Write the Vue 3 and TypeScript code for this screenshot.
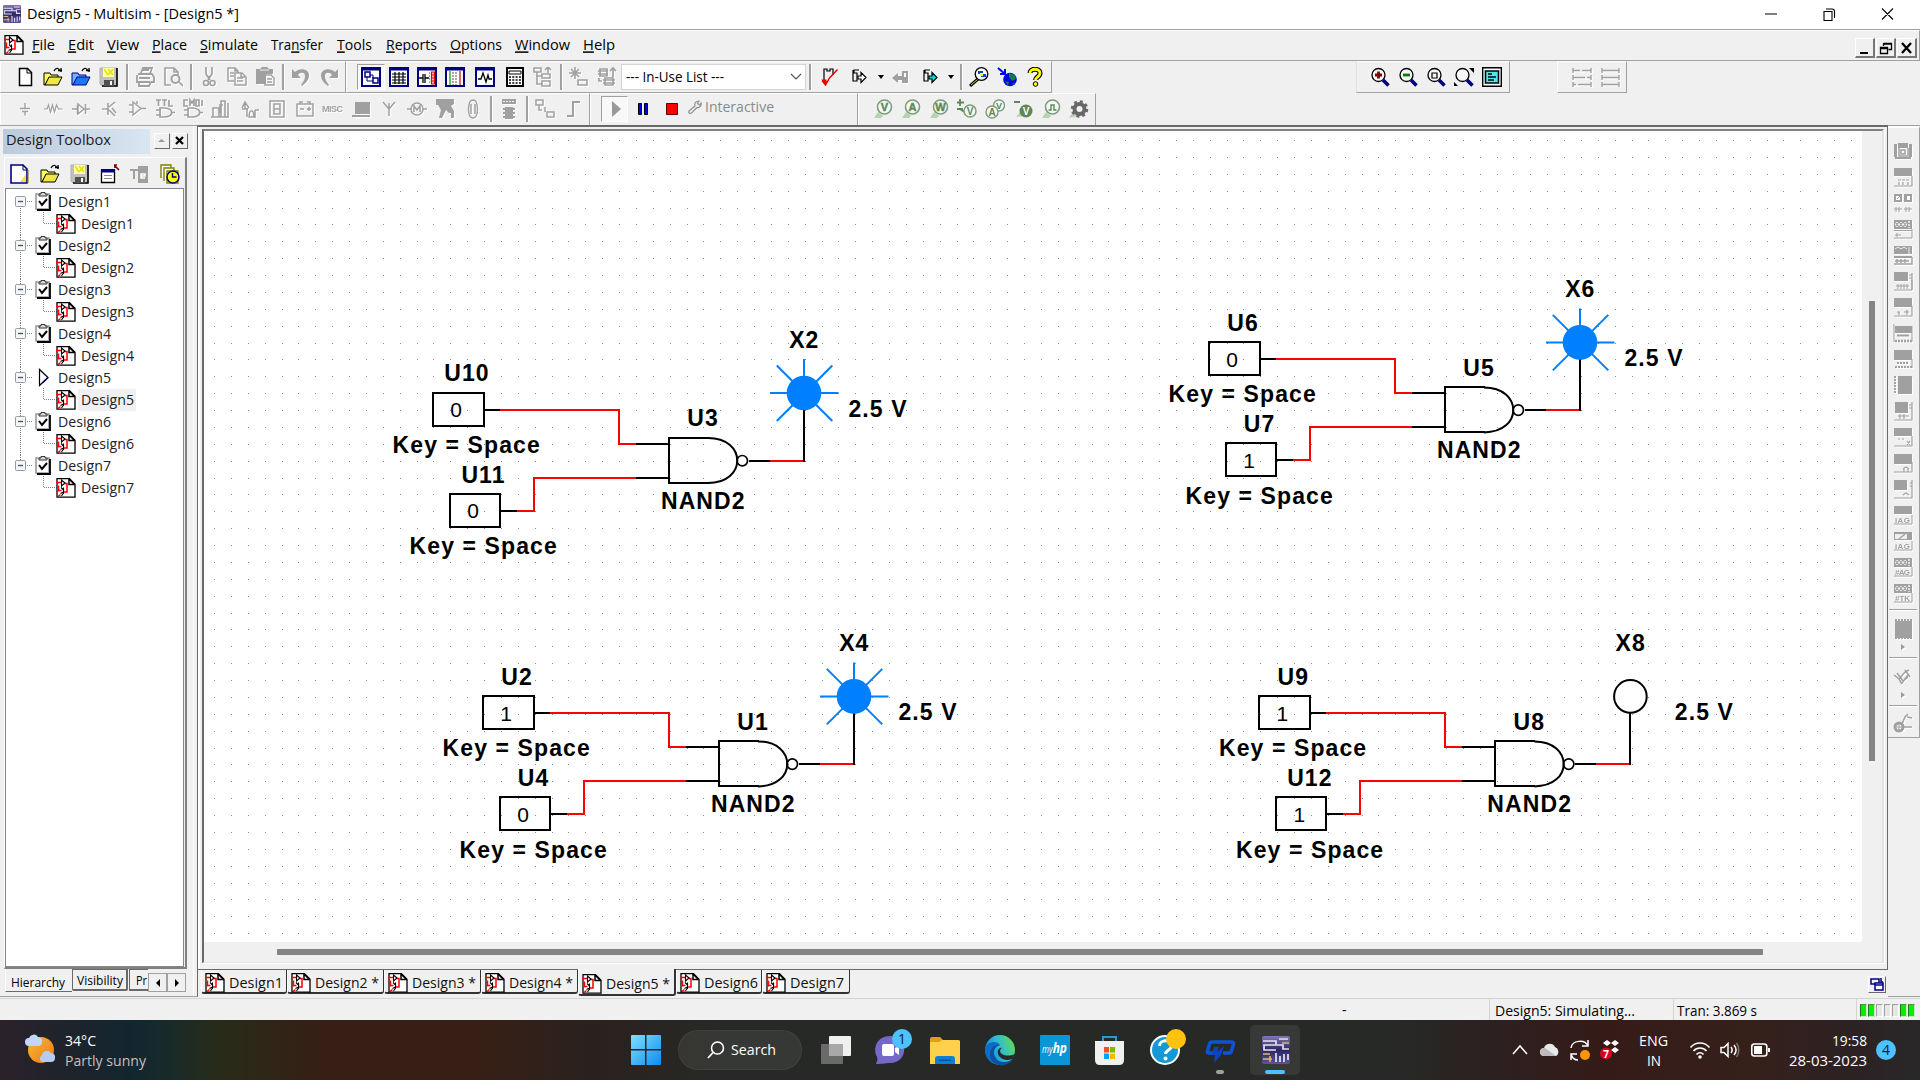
<script setup lang="ts">
import { h } from 'vue'

/* Text fitted to a known width; "&" marks the underlined accelerator letter. */
interface TxProps { t: string; w: number; s?: number; c?: string; f?: string }
const Tx = (p: TxProps) => {
  const s = p.s ?? 15
  const k = p.t.indexOf('&')
  const body = k < 0
    ? [p.t]
    : [p.t.slice(0, k), h('tspan', { 'text-decoration': 'underline' }, p.t[k + 1]), p.t.slice(k + 2)]
  return h('svg', { width: p.w, height: 20, overflow: 'visible', display: 'block' }, [
    h('text', {
      x: 0, y: 10 + s * 0.357, 'font-size': s, textLength: p.w, lengthAdjust: 'spacingAndGlyphs',
      fill: p.c ?? '#000', 'font-family': p.f ?? "'Open Sans','Noto Sans',sans-serif",
    }, body),
  ])
}
Tx.props = ['t', 'w', 's', 'c', 'f']

const g = '#a0a0a0'
const doc = '<path d="M1 .7h12.500l5.500 5.500v13H1z" fill="#fff" stroke="#000" stroke-width="1.300"/><path d="M13 .7v5.800h6M13 1l5.500 5.500" fill="none" stroke="#000" stroke-width="1.500"/><path d="M0 4.500h5M2.500 7.500v6M2.500 12.500h3M8.500 5.500h2.500v8.500H8M2 18.500l2.500-2" fill="none" stroke="#f00" stroke-width="1.500"/><path d="M5.500 2v6l3.500-3zM5 9.500l3 3M7.500 9.500v6.500M7.500 14l-3 1.500M7.500 15l-2 3" fill="none" stroke="#000" stroke-width="1.100"/>'
const win = (s: string) => `<path d="M1 1h18v18H1z" fill="#fff" stroke="#000080" stroke-width="2"/><path d="M1 2h18" stroke="#000080" stroke-width="3"/>${s}`
const lens = (s: string) => `<circle cx="8.500" cy="8" r="6.500" fill="#f8f8f8" stroke="#000" stroke-width="1.300"/><path d="M13 13l5.500 5.500" stroke="#000080" stroke-width="3.500"/>${s}`
const ln = (d: string, w = 1.4) => `<path d="${d}" fill="none" stroke="${g}" stroke-width="${w}"/>`
const probe = (s: string, t: string) => `<path d="M1 19l4-6 5 4-2 2z" fill="#b5d3b0"/><circle cx="11.500" cy="8" r="7" fill="#f4f8f4" stroke="#7d9c78" stroke-width="1.600"/><text x="11.500" y="12" font-size="11" font-weight="700" text-anchor="middle" fill="#5f8659" stroke="#5f8659" stroke-width=".4" font-family="Liberation Sans">${t}</text>${s}`
const folder = (a: string, b: string) => `<path d="M1 6h6l1 2h7v3H6l-4 7H1z" fill="${a}" stroke="#000" /><path d="M6 10h13l-4 8H2z" fill="${b}" stroke="#000"/><path d="M11 4c2-4 5-3 6 0M15 3.500h4M18 1v4" fill="none" stroke="#000" stroke-width="1.300"/>`

const icons: Record<string, string> = {
  doc,
  new: '<path d="M4.500 1.500h8l4 4v13h-12z" fill="#fff" stroke="#000" stroke-width="1.500"/><path d="M12 2v4h4" fill="none" stroke="#000"/>',
  open: folder('#ffff60', '#f0e840'),
  openb: '<path d="M1 6h6l1 2h7v3H6l-4 7H1z" fill="#70b4ff" stroke="#000080"/><path d="M6 10h13l-4 8H2z" fill="#1878f8" stroke="#000080"/><path d="M11 4c2-4 5-3 6 0M15 3.500h4M18 1v4" fill="none" stroke="#000" stroke-width="1.300"/>',
  save: '<path d="M1 1h17v18H3l-2-2z" fill="#c0c0c0" stroke="#b0b0b0"/><path d="M18 1v18H3" fill="none" stroke="#000" stroke-width="1.600"/><path d="M4 1h11v9H4z" fill="#ffffb0"/><path d="M5 2l4 6M9 2l5 6M14 2l-5 6" stroke="#e8e000" stroke-width="1.500"/><path d="M5 13h10v6H5z" fill="#505050"/><path d="M11 14h2v4h-2z" fill="#fff"/>',
  print: ln('M6 6l2-5h9l-2 6M3 7h14l2 3v5h-3M2 8v7h13M4 11h11M4 15v4h10l2-4M8 3h6', 1.8),
  preview: ln('M8 18H2V1h9l4 4v3M11 1v4h4M16 15l4 4', 1.6) + `<circle cx="12.500" cy="12" r="4" fill="none" stroke="${g}" stroke-width="2"/>`,
  cut: ln('M7 0v7l4 6M13 0v7l-4 6M10 9v4', 1.7) + `<circle cx="7" cy="16" r="2.500" fill="none" stroke="${g}" stroke-width="1.600"/><circle cx="13.500" cy="16" r="2.500" fill="none" stroke="${g}" stroke-width="1.600"/>`,
  copy: ln('M7 14H1V1h7l3 3v2M8 1v3h3M3 6h4M3 9h4M8 6h7l4 4v8H8zM14 6v4h4M10 11h6M10 14h6', 1.5),
  paste: `<path d="M1 2h4l2-2h5l2 2h4v5h-7v10H1z" fill="${g}"/><path d="M5 3h9" stroke="#efefef"/>` + ln('M10 8h6l3 3v7h-9zM12 12h5M12 15h5'),
  undo: `<path d="M1 2l3 3c5-5 14-3 14 3 0 5-3 8-7 11l-1-1c3-4 4-6 4-9 0-4-5-4-7-1l3 3H1z" fill="${g}"/>`,
  redo: `<path d="M19 2l-3 3C11 0 2 2 2 8c0 5 3 8 7 11l1-1c-3-4-4-6-4-9 0-4 5-4 7-1l-3 3h9z" fill="${g}"/>`,
  w1: win('<path d="M4 5h5v5H4zM12 11h5v5h-5z" fill="none" stroke="#000080" stroke-width="1.500"/><path d="M6 10v4h6M9 8h3v3" fill="none" stroke="#000080"/>'),
  w2: win('<path d="M3 7h14M3 10h14M3 13h14M3 16h14M6 5v12M10 5v12M14 5v12" stroke="#000" stroke-width="1.200"/>'),
  w3: win('<path d="M2 11h4M6 7v9M8 7v9M8 11h4" stroke="#000" stroke-width="1.300"/><path d="M12 6h1M12 9h1M12 12h1M12 15h1M14.500 5h3v12h-3zM14 8h4M14 11h4M14 14h4" stroke="#d00" fill="#fcc" stroke-width="1.200"/>'),
  w4: win('<path d="M5 4v14" stroke="#090" stroke-width="1.200"/><path d="M15 4v14" stroke="#d00" stroke-width="1.200"/><path d="M8 5v13M11 5v13" stroke="#555" stroke-dasharray="2 1"/>'),
  w5: win('<path d="M3 12h3l2-6 3 9 2-7 1 4h3" fill="none" stroke="#000" stroke-width="1.300"/>'),
  calc: '<path d="M2 1h16v18H2z" fill="#fff" stroke="#000" stroke-width="2"/><path d="M4 4h12v3H4z" fill="none" stroke="#000"/><path d="M4 10h12M4 13h12M4 16h12" stroke="#000" stroke-width="1.500" stroke-dasharray="2 1.300"/>',
  tree: ln('M1 1h7v4H1zM4 5v12h5M4 9h5M9 7h8v4H9zM9 14h8v5H9zM15 6V0M12 3l3-3 3 3', 1.6),
  star: ln('M6 0v12M0 6h12M2 2l8 8M10 2l-8 8M9 13h9v5H9z', 1.6),
  db: ln('M3 2h7v7H3zM1 4h10M1 7h10M8 11h8v7H8zM6 13h12M6 16h12M16 10V1M13 4l3-3 3 3M2 11v3h3', 1.7),
  check: '<path d="M5 14V2h3v2h3V2h3v6" fill="none" stroke="#000" stroke-width="1.200"/><path d="M3 13.500l3.500 4.500 4-7 8-8.500" fill="none" stroke="#e00" stroke-width="1.400"/><path d="M2.500 12.500h5v2l2-1-3 5z" fill="#e00"/>',
  fwd: '<path d="M10 3H5V6h3v8H4V3M4 14h4" fill="none" stroke="#000" stroke-width="1.200"/><path d="M9 9h3V5.500l5 5-5 5V12H9z" fill="#fff" stroke="#000" stroke-width="1.200"/>',
  fwdc: '<path d="M10 3H5V6h3v8H4V3M4 14h4" fill="none" stroke="#000" stroke-width="1.200"/><path d="M9 9h3V5.500l5 5-5 5V12H9z" fill="#00e0e0" stroke="#000" stroke-width="1.200"/>',
  back: `<path d="M11 4h6v12h-6v-3H7v3l-6-5 6-5v3h4z" fill="${g}"/><path d="M13 6h2v4h-2z" fill="#fff"/>`,
  find: '<path d="M9 12l-8 7" stroke="#000" stroke-width="3"/><path d="M9 12l-7 6" stroke="#e8d800" stroke-width="1"/><circle cx="12.500" cy="7" r="6.300" fill="#fff" stroke="#000" stroke-width="1.300"/><path d="M9 4h5v3h3v3h-5V7H9z" fill="#1048c0"/><path d="M11 6h3v3h-3z" fill="#ff0"/>',
  globe: '<path d="M1 1l7 6M8 2v5H3" stroke="#0000f0" stroke-width="2" fill="none"/><circle cx="13" cy="12.500" r="6.800" fill="#0000e8"/><path d="M12 6l6 2 1 4-4 2-3-4zM8 14l4 1-1 4zM15 17l3-2-1 3z" fill="#108040"/>',
  help: '<path d="M5 6c0-5 10-5 10 0 0 4-4.500 4-4.500 7" fill="none" stroke="#000" stroke-width="5"/><path d="M5 6c0-5 10-5 10 0 0 4-4.500 4-4.500 7" fill="none" stroke="#ff0" stroke-width="2.800"/><circle cx="10.500" cy="17" r="2.300" fill="#ff0" stroke="#000"/>',
  zin: lens('<path d="M8.500 4.500v7M5 8h7" stroke="#800000" stroke-width="2.800"/>'),
  zout: lens('<path d="M5 8h7" stroke="#008000" stroke-width="2.800"/>'),
  zarea: lens('<path d="M6 6h5v5H6z" fill="none" stroke="#000" stroke-width="1.200"/>'),
  zfit: lens('<path d="M15 1h5v5zM0 19v-4l4 4z" fill="#000"/>'),
  zfull: '<path d="M.7.7h18.600v18.600H.7z" fill="#fff" stroke="#000" stroke-width="1.400"/><path d="M3.500 4h13v12h-13z" fill="#50e8f0" stroke="#000" stroke-width="1.600"/><path d="M6 7h4M6 10h8M6 13h6" stroke="#000" stroke-width="1.300"/>',
  h1: ln('M1 1v5M19 1v5M1 3.500h18M1 8v5M19 8v5M1 10.500h18M1 15v5M19 15v5M1 17.500h18') + '<path d="M9 1v4M14 8v4M5 15v4" stroke="#efefef" stroke-width="2"/>',
  h2: ln('M2 1v5M19 1v5M2 3.500h17M2 8v5M19 8v5M2 10.500h17M2 15v5M19 15v5M2 17.500h17'),
  c1: ln('M10 4v5M5 9.500h10M7 12.500h6M10 12.500v4', 1.4),
  c2: ln('M1 10h3l1.500-4 2 7 2-7 2 7 2-7 2 4h4', 1.2),
  c3: ln('M1 10h5M6.500 6v9M7 5l6 5-6 5zM14.500 5v10M15 10h4', 1.5),
  c4: ln('M3 10h6M9 4v12M10 8l6-5M10 11l6 6M13 9l4 5', 1.6),
  c5: ln('M2 6h4M2 13h4M6 3v13l8-6.500zM14 9.500h5M10 5v-3', 1.4),
  ttl: ln('M1 1h5M3.500 1v6M7 1h5M9.500 1v6M14 1v6h4M1 11h5M1 16h5M5 9h5c9 1 9 8 0 9H5zM17 13.500h3', 1.7),
  cmos: ln('M5 1H1v6h4M7 7V1l2 3 2-3v6M13 1h3v6h-3zM19 1v6M1 11h5M1 16h5M5 9h5c9 1 9 8 0 9H5zM17 13.500h3', 1.7),
  c8: ln('M2 18V9h6v9zM10 18V2h4v16zM12 6H9v8M17 4v14M0 18h18', 1.6),
  c9: ln('M3 9l3-6 4 6M6 3v7M3 10h6M8 18V9M10 18c0-8 5-8 5 0zM16 11h4M16 11v8', 1.5),
  c10: ln('M3 2h14v16H3zM7 5h6v10H7zM7 10h6', 1.5),
  c11: ln('M2 5h16v12H2zM5 5V3h3M12 3h3v2M5 10h4M12 10h4M14 8v4', 1.5),
  misc: `<text x="-1" y="13" font-size="9" textLength="21" font-family="Liberation Sans" font-weight="700" fill="${g}">MISC</text>`,
  c13: `<path d="M4 3h15v12H4zM1 16h18v2H1z" fill="${g}"/>`,
  c14: ln('M10 17V4M10 10L4 3M10 10l6-7', 1.5),
  c15: ln('M0 10h4M16 10h4M7 13V7l3 4 3-4v6', 1.6) + `<circle cx="10" cy="10" r="6" fill="none" stroke="${g}" stroke-width="1.500"/>`,
  c16: `<path d="M1 0h18v5l-3 2 3 5v7h-3v-5h-2l-3-3-4 8H4l2-8-3-5H1z" fill="${g}"/>`,
  c17: ln('M10 1c6 0 6 18 0 18s-6-18 0-18M8 5v10M12 5v10', 1.5),
  chip: `<path d="M6 8h8v12H6zM3 0h14v5H3z" fill="${g}"/>` + ln('M4 10h12M4 14h12M4 18h12', 1.8) + '<path d="M4 2.500h12" stroke="#efefef" stroke-dasharray="2 1"/>',
  j1: ln('M1 1h7v5H1zM4 6v5h3M10 8v5M12 13h7v5h-7z', 1.5),
  j2: ln('M4 17h6V3h7', 2),
  pv: probe('', 'V'), pa: probe('', 'A'), pw: probe('', 'W'),
  pd: '<path d="M3 0v7M0 3.500h7M0 10h6M9 14l-6-4" stroke="#5f8659" stroke-width="1.800"/><circle cx="13" cy="12" r="6" fill="#f4f8f4" stroke="#7d9c78" stroke-width="1.500"/><text x="13" y="16" font-size="10" font-weight="700" text-anchor="middle" fill="#5f8659" font-family="Liberation Sans">V</text>',
  pva: '<circle cx="14" cy="6.500" r="5.500" fill="#f4f8f4" stroke="#7d9c78" stroke-width="1.400"/><text x="14" y="10" font-size="9" font-weight="700" text-anchor="middle" fill="#5f8659" font-family="Liberation Sans">V</text><circle cx="7" cy="13" r="6" fill="#f4f8f4" stroke="#7d9c78" stroke-width="1.400"/><text x="7" y="17" font-size="10" font-weight="700" text-anchor="middle" fill="#5f8659" font-family="Liberation Sans">A</text>',
  pr: '<path d="M1 3h6" stroke="#5f8659" stroke-width="2"/><path d="M3 18l5-6 3 5z" fill="#b5d3b0"/><circle cx="13" cy="12" r="6.500" fill="#5f8659"/><text x="13" y="16" font-size="10" font-weight="700" text-anchor="middle" fill="#fff" font-family="Liberation Sans">V</text>',
  pq: probe('<path d="M7.500 11h2.500V6h3v5h2.500" fill="none" stroke="#5f8659" stroke-width="1.400"/>', ''),
  gear: '<path d="M0 19l4-6 5 4z" fill="#b5d3b0"/><circle cx="10.500" cy="10" r="5" fill="none" stroke="#686868" stroke-width="4"/><circle cx="10.500" cy="10" r="7.500" fill="none" stroke="#686868" stroke-width="2.500" stroke-dasharray="3 2.900"/>',
  tnew: '<path d="M1 1h12l4 4v14H1z" fill="#fff" stroke="#000080" stroke-width="1.600"/><path d="M13 1v5h4" fill="none" stroke="#000080"/><path d="M10 18l6-8v8z" fill="#f0e040"/><path d="M18 6v13" stroke="#808000"/>',
  tprop: '<path d="M1.500 6h13v12.500h-13z" fill="#fff" stroke="#000" stroke-width="1.300"/><path d="M1 5h14v3.500H1z" fill="#000080"/><path d="M4 11.500h8M4 14.500h8" stroke="#888"/><path d="M14 1h3M15 1v3M15 2l4 4" stroke="#800000" stroke-width="1.700" fill="none"/>',
  te: `<path d="M8 2h10v17H8z" fill="${g}"/>` + ln('M0 6h8M4 6v9', 2) + '<path d="M15 14h-4v-4h4v2h-4M15 14" fill="none" stroke="#fff" stroke-width="1.500"/>',
  tclock: '<path d="M1 14V1h10v3M4 17V4h10v3M7 19V7h11v12z" fill="#fff" stroke="#808000" stroke-width="1.400"/><circle cx="13" cy="13" r="6" fill="#ff0" stroke="#000080" stroke-width="1.500"/><path d="M12.500 9v4h4" fill="none" stroke="#000080" stroke-width="1.500"/>',
  clip: '<path d="M3 2h13v15H3z" fill="#fff" stroke="#999" stroke-width="1.600"/><path d="M4 18h13V3" stroke="#000" stroke-width="1.800" fill="none"/><path d="M6 4V2h2V.5h4V2h2v2z" fill="#ddd" stroke="#333"/><path d="M6 9l3 4 5-6" fill="none" stroke="#000" stroke-width="2"/>',
  run: '<path d="M6.500 1.500v16l8.500-8z" fill="#fff" stroke="#000" stroke-width="1.200"/><path d="M15 9.500l-5 5" stroke="#000080" stroke-width="1.500"/>',
}

interface Tool { i: string; w: number; p?: boolean; d?: boolean }
const tl = (s: string, d = false): Tool[] => s.split(' ').map(a => {
  const [i, w] = a.split(':')
  return { i, w: w ? +w : i === '|' ? 8 : 28, p: i === 'w1', d: d || /^(print|preview|cut|copy|paste|undo|redo|tree|star|db|back|h1|h2)$/.test(i) }
})
const bar1 = tl('new open openb save | print preview | cut copy paste | undo redo')
const bar2 = tl('w1 w2 w3 w4 w5:31 calc:29 tree | star db')
const bar3 = tl('|:9 check fwd:31 arr:13 back:27 fwdc:31 arr:12 |:8 find globe help')
const bar4 = tl('c1 c2 c3 c4 c5 ttl cmos c8 c9 c10 c11 misc c13 c14 c15 c16 c17 | chip | j1 j2', true)
const bar5 = tl('pv pa pw pd pva pr pq gear')
const barZ = tl('zin zout zarea zfit zfull')
const barH = tl('h1 h2')

const menu: [string, number, number][] = [
  ['&File', 32, 23], ['&Edit', 68, 26], ['&View', 107, 32], ['&Place', 152, 35], ['&Simulate', 200, 58], ['Tra&nsfer', 271, 52],
  ['&Tools', 337, 35], ['&Reports', 386, 51], ['&Options', 450, 52], ['&Window', 515, 55], ['&Help', 583, 32],
]
const menuItems = menu.map(([t, x, w], k) => ({ t, w, gap: k ? x - menu[k - 1][1] - menu[k - 1][2] : 8 }))

const designs = [1, 2, 3, 4, 5, 6, 7]
const tabs = designs.map((n, k) => ({
  t: `Design${n}${n > 1 && n < 6 ? ' *' : ''}`, n, w: [86, 97, 97, 97, 98, 86, 88][k], tw: n > 1 && n < 6 ? 64 : 54,
}))

/* Instrument buttons: a screen on top and terminals underneath. */
const f = (d: string) => `<path d="${d}" fill="${g}"/>`
const legs = ln('M1 19h18V9M3 15h13M5 13v5M8 13v5M11 13v5M14 13v5', 1)
const wave = f('M1 1h18v9H1z') + '<path d="M2 3h12v5H2z" fill="#efefef"/>' + ln('M2 3l4 5 4-5 4 5M2 8l4-5 4 5 4-5', 1.2) + '<path d="M16 2v7" stroke="#efefef" stroke-width="1.500" stroke-dasharray="2 1"/>'
const cap = (t: string) => ln('M1 19h18V10', 1) + `<text x="2" y="18" font-size="8" textLength="15" fill="${g}" font-family="Liberation Sans" font-weight="700">${t}</text>`
const instruments = [
  f('M1 3h3v13H1zM16 3h3v13h-3zM5 2h10v5H5zM2 16h16v2H2z') + ln('M6 7v8h9V7M8 9h4v4H8z', 1.5),
  f('M1 1h18v8H1z') + ln('M1 19h18V9M5 13h3M9 13h3M13 13h3M6 15v3M10 15v3M15 15v3', 1.2),
  f('M1 1h8v8H1zM11 1h8v8h-8z') + '<path d="M3 3h4v4H3zM14 3h3v4h-3z" fill="#fff"/>' + ln('M1 16h8M11 16h8M3 14v5M6 14v5M13 14v5M16 14v5M4 6l3-3', 1),
  wave + f('M1 11h18v1H1z') + ln('M1 19h18V10M2 16h6M4 14v4', 1),
  f('M1 1h18v8H1z') + '<path d="M2 4l3-2 3 2 3-2 3 2M16 2v7" stroke="#eee" fill="none"/>' + f('M1 11h18v2H1z') + ln('M1 19h18v-7M2 16h14M4 14v4M8 14v4M12 14v4'),
  f('M1 1h14v9H1z') + ln('M19 2v17M16 4h3M16 7h3', 1.2) + legs,
  f('M1 1h18v9H1z') + ln('M1 19h18V9M4 15h3M6 15v3M11 15h5M14 13v5', 1.2),
  f('M2 3h17v7H2z') + ln('M1 1v18M19 3v16', 1) + ln('M4 12.500h12', 2) + `<path d="M2 18h17" stroke="${g}" stroke-width="2.500" stroke-dasharray="2 1"/>`,
  f('M1 1h18v10H1z') + `<path d="M4 14h12M2 18h17" stroke="${g}" stroke-width="2" stroke-dasharray="2 1"/>` + ln('M19 10v9', 1),
  f('M5 1h14v18H5z') + `<path d="M2 1v18" stroke="${g}" stroke-width="2" stroke-dasharray="2 1"/>`,
  f('M2 1h13v11H2z') + ln('M1 19h18V1M16 4h3M16 7h3M5 15h11M7 13v5M11 13v5', 1.2),
  f('M1 1h18v8H1z') + ln('M1 19h18V9M5 12h2M9 12h2M14 14l3 4M17 14l-3 4', 1.2),
  f('M1 1h18v10H1z') + ln('M1 19h18V9M10 16l3-2 3 2M11 16v3M15 16v3', 1.2),
  f('M1 1h13v10H1z') + ln('M1 19h18V1M17 4h2M17 7h2M10 16l3-2 3 2', 1.2),
  f('M1 1h18v8H1z') + cap('iAG'),
  f('M1 1h18v8H1z') + '<path d="M2 3h12v5H2z" fill="#efefef"/>' + ln('M6 8l6-5M15 6h4') + cap('iAG'),
  wave + cap('#AG'),
  wave + cap('#TK'),
]

/* Schematic grid: one-pixel dots every 16.875 px. */
const P = 16.875
let dots = ''
for (let r = 0; r < 48; r++) for (let c = 0; c < 98; c++) dots += `M${Math.round(10 + c * P)} ${Math.round(9 + r * P)}h1v1h-1z`

const circuits = [
  { dx: 0, dy: 0, a: 'U10', b: 'U11', u: 'U3', x: 'X2', va: '0', vb: '0', on: true },
  { dx: 776, dy: -50.6, a: 'U6', b: 'U7', u: 'U5', x: 'X6', va: '0', vb: '1', on: true },
  { dx: 50, dy: 303.4, a: 'U2', b: 'U4', u: 'U1', x: 'X4', va: '1', vb: '0', on: true },
  { dx: 826.4, dy: 303.4, a: 'U9', b: 'U12', u: 'U8', x: 'X8', va: '1', vb: '1', on: false },
]

const edge = '<defs><linearGradient id="eg" x1="0" y1=".6" x2="1" y2=".2"><stop offset="0" stop-color="#0f7ad0"/><stop offset=".45" stop-color="#2cb8dc"/><stop offset="1" stop-color="#62e04c"/></linearGradient></defs><circle cx="15" cy="15" r="15" fill="url(#eg)"/><path d="M0 14C2 6 12 5 15 10c-6 1-8 8-4 13 3 5 8 6 12 5C13 33 0 27 0 14z" fill="#0d6cc4"/><path d="M15 10c-7 2-8 9-4 14 4 4 11 4 17 0-4 7-14 8-20 3C2 20 6 9 15 10z" fill="#0a4fa0"/><path d="M17 13c-2 1-3 4 0 6 3 2 8 2 13 0-1 2-2 4-3 5-5 2-10 1-13-3-3-5 0-9 3-8z" fill="#272926"/>'
const multisim = '<defs><linearGradient id="ms" x1="0" y1="0" x2="0" y2="1"><stop offset="0" stop-color="#8078b4"/><stop offset=".5" stop-color="#2c2660"/><stop offset="1" stop-color="#5c549c"/></linearGradient></defs><rect width="28" height="28" rx="2" fill="url(#ms)"/><path d="M1 5h13v4H2v5h12M17 3h9M15 9h6v4h6M14 26v-9M18 26v-6M22 26v-8M26 24v-6" fill="none" stroke="#e6e2f2" stroke-width="1.700"/><path d="M20 7h7M1 18h7M1 23h9M8 20v6" stroke="#dcb678" stroke-width="1.700"/>'
const apps = [
  { k: 'task', s: '<rect x="9" y="1" width="22" height="20" rx="1" fill="#f0f0f0"/><rect x="1" y="9" width="22" height="20" rx="1" fill="#6a6a6a"/><rect x="9" y="9" width="14" height="12" fill="#a8a8a8"/>' },
  { k: 'chat', s: '<path d="M15 1c19 0 19 27 0 27-4 0-6 1-14 1 1-3 2-4 1-7C-3 12 3 1 15 1z" fill="#7468c8"/><rect x="7" y="9" width="12" height="12" rx="2" fill="#fff"/><path d="M20 13l4-2v9l-4-3z" fill="#fff"/><circle cx="27" cy="4" r="10" fill="#4cc2ff"/><text x="27" y="9" font-size="14" text-anchor="middle" fill="#102030" font-family="Open Sans">1</text>' },
  { k: 'files', s: '<path d="M0 4q0-2 2-2h8l3 3h15q2 0 2 2v21H0z" fill="#e0a013"/><path d="M0 7h9l3-2h16q2 0 2 2v22H0z" fill="#ffd04c"/><path d="M5 29v-5q0-3 3-3h14q3 0 3 3v5z" fill="#0f7fd6"/><path d="M9 24.500h12V26H9z" fill="#0b4f94"/>' },
  { k: 'edge', s: edge },
  { k: 'myhp', s: '<rect width="30" height="30" rx="1" fill="#0a96d6"/><text x="2" y="18" font-size="10" textLength="25" lengthAdjust="spacingAndGlyphs" font-style="italic" fill="#fff" font-family="Open Sans">my<tspan font-weight="700" font-size="15">hp</tspan></text>' },
  { k: 'store', s: '<path d="M8 7V2h13v5" fill="none" stroke="#1d9ce0" stroke-width="2"/><path d="M0 6h29v19q0 5-5 5H5q-5 0-5-5z" fill="#f0f0f0"/><path d="M9 12h5v5.500H9z" fill="#f25022"/><path d="M15 12h5v5.500h-5z" fill="#7fba00"/><path d="M9 18.500h5V24H9z" fill="#00a4ef"/><path d="M15 18.500h5V24h-5z" fill="#ffb900"/>' },
  { k: 'help', s: '<circle cx="15" cy="15" r="14" fill="#1499d6" stroke="#fff" stroke-width="2"/><path d="M9.500 11c0-7 12-7 12 0 0 4-6 4-6 8" fill="none" stroke="#fff" stroke-width="3"/><circle cx="15.500" cy="23.500" r="2" fill="#fff"/><circle cx="26" cy="4" r="10" fill="#ffc20e"/>' },
  { k: 'pp', s: '<path d="M10 18H4q-2 0-1.500-2L4.500 9Q5 7 7.500 7H26q3 0 2.500 2l-2 7q-.5 2-3 2h-5.500" fill="none" stroke="#0b55d4" stroke-width="3.600"/><path d="M7 7h5M19 11l-3 9-7 8 1-9H7l2-7h5l-2 5" fill="#0b44c0"/>' },
  { k: 'ms', s: `<g transform="translate(1 1)">${multisim}</g>` },
]
</script>

<template>
  <div class="app">
    <header class="title">
      <svg class="logo" width="18" height="18" viewBox="0 0 28 28" preserveAspectRatio="none" v-html="multisim" />
      <Tx t="Design5 - Multisim - [Design5 *]" :w="212" :s="15" />
      <svg class="sys" width="130" height="20" fill="none" stroke="#000" stroke-width="1.100">
        <path d="M1 10h12M60 7.500h8v9h-8zM62 5h6q2.500 0 2.500 2.500V14M118 4.500l11 11M129 4.500l-11 11" />
      </svg>
    </header>

    <nav class="menu">
      <svg class="mi" width="20" height="20" v-html="icons.doc" />
      <Tx v-for="m in menuItems" :key="m.t" :t="m.t" :w="m.w" :style="{ marginLeft: m.gap + 'px' }" />
      <div class="mdi">
        <span class="btn"><svg width="18" height="18"><path d="M4 14h8" stroke="#000" stroke-width="2" /></svg></span>
        <span class="btn"><svg width="18" height="18" fill="none" stroke="#000"><path d="M6.500 4.500h8v6h-3M6.500 7V5h8M3.500 8.500h7v6h-7zM3.500 9.500h7" stroke-width="1.300" /></svg></span>
        <span class="btn"><svg width="18" height="18"><path d="M4 4l9 10M13 4l-9 10" stroke="#000" stroke-width="2.300" /></svg></span>
      </div>
    </nav>

    <section class="bars">
      <div class="row r1">
        <div class="tb" v-for="(b, k) in [bar1, bar2]" :key="k" :class="'t' + k">
          <span v-for="(t, j) in b" :key="j" class="cell" :class="{ sep: t.i === '|', pressed: t.p }" :style="{ width: t.w + 'px' }">
            <svg v-if="t.i !== '|'" width="20" height="20" :class="{ dis: t.d }" v-html="icons[t.i]" />
          </span>
          <template v-if="k === 1">
            <div class="combo"><Tx t="--- In-Use List ---" :w="98" :s="14" />
              <svg width="12" height="8"><path d="M1 1l5 5 5-5" fill="none" stroke="#555" stroke-width="1.200" /></svg></div>
            <span v-for="(t, j) in bar3" :key="'c' + j" class="cell" :class="{ sep: t.i === '|' }" :style="{ width: t.w + 'px' }">
              <svg v-if="t.i === 'arr'" width="6" height="4"><path d="M0 0h6L3 4z" /></svg>
              <svg v-else-if="t.i !== '|'" width="20" height="20" :class="{ dis: t.d }" v-html="icons[t.i]" />
            </span>
          </template>
        </div>
        <div class="tb tz"><span v-for="t in barZ" :key="t.i" class="cell" :style="{ width: '28px' }"><svg width="20" height="20" v-html="icons[t.i]" /></span></div>
        <div class="tb th"><span v-for="t in barH" :key="t.i" class="cell" :style="{ width: '28px' }"><svg class="dis" width="20" height="20" v-html="icons[t.i]" /></span></div>
      </div>
      <div class="row r2">
        <div class="tb t4">
          <span v-for="(t, j) in bar4" :key="j" class="cell" :class="{ sep: t.i === '|' }" :style="{ width: t.w + 'px' }">
            <svg v-if="t.i !== '|'" class="dis" width="20" height="20" overflow="visible" v-html="icons[t.i]" />
          </span>
        </div>
        <div class="tb sim">
          <span class="playbox"><svg width="10" height="16"><path d="M0 0l9 8-9 8z" fill="#999" /></svg></span>
          <svg class="pause" width="11" height="12"><path d="M.5.5h3v11h-3zM6.500.5h3v11h-3z" fill="#00f" stroke="#000" /></svg>
          <svg class="stop" width="12" height="12"><path d="M.5.5h11v11H.5z" fill="#f00" stroke="#600" /></svg>
          <svg class="wrench" width="14" height="14"><path d="M1 11l6-5c-1-3 1-5 4-5L9.500 3.500l2 1.500L13 3c1 3-2 5-4 4.500L3.500 13C2 14 0 12.500 1 11z" fill="none" stroke="#909090" stroke-width="1.200" /></svg>
          <Tx t="Interactive" :w="69" :s="15" c="#8a8a8a" />
        </div>
        <div class="tb t5"><span v-for="t in bar5" :key="t.i" class="cell" :style="{ width: '28px' }"><svg width="20" height="20" v-html="icons[t.i]" /></span></div>
      </div>
    </section>

    <main class="main">
      <aside class="left">
        <div class="lhead">
          <div class="ltitle"><Tx t="Design Toolbox" :w="105" :s="15" c="#1c1c1c" /></div>
          <span class="sbtn"><svg width="14" height="14"><path d="M3 8h7L6.500 5z" fill="#999" /></svg></span>
          <span class="sbtn"><svg width="14" height="14"><path d="M3 3l7 7M10 3l-7 7" stroke="#000" stroke-width="2.200" /></svg></span>
        </div>
        <div class="lbody">
          <div class="ltools">
            <svg v-for="i in ['tnew', 'open', 'save', 'tprop', 'te', 'tclock']" :key="i" width="20" height="20" v-html="icons[i]" />
          </div>
          <div class="tree">
            <div v-for="n in designs" :key="n" class="node">
              <div class="trow">
                <svg class="exp" width="28" height="22"><path v-if="n < 7" d="M10.500 17v27" class="dl" /><path v-if="n > 1" d="M10.500 0v6" class="dl" /><rect x="5.500" y="5.500" width="10" height="10" rx="1" fill="#f6f6f6" stroke="#999" /><path d="M8 10.500h5" stroke="#3050a0" stroke-width="1.300" /><path d="M17 10.500h5" class="dl" /></svg>
                <svg class="nic" width="20" height="20" v-html="n === 5 ? icons.run : icons.clip" />
                <Tx class="nlab" :t="'Design' + n" :w="53" :s="15" c="#222" />
              </div>
              <div class="trow kid">
                <svg class="elbow" width="15" height="22"><path d="M1.500 -1v11.500h13" class="dl" /></svg>
                <svg width="20" height="20" v-html="icons.doc" />
                <span class="lab" :class="{ sel: n === 5 }"><Tx :t="'Design' + n" :w="53" :s="15" c="#222" /></span>
              </div>
            </div>
          </div>
        </div>
        <div class="ltabs">
          <div class="lt on"><Tx t="Hierarchy" :w="54" :s="13" /></div>
          <div class="lt vis"><Tx t="Visibility" :w="46" :s="13" /></div>
          <div class="lt pr"><Tx t="Pr" :w="11" :s="13" /></div>
          <span class="ab"><svg width="6" height="8"><path d="M5 0v8L1 4z" /></svg></span>
          <span class="ab"><svg width="6" height="8"><path d="M1 0v8l4-4z" /></svg></span>
        </div>
      </aside>

      <section class="center">
        <div class="frame">
          <div class="inner">
            <svg class="canvas" width="1658" height="811">
              <g transform="translate(-204 -131)">
                <path :d="dots" transform="translate(204 131)" fill="#8c8c8c" shape-rendering="crispEdges" />
                <g v-for="c in circuits" :key="c.u" :transform="`translate(${c.dx} ${c.dy})`">
                  <g fill="none" stroke="#000" stroke-width="2" shape-rendering="crispEdges">
                    <path d="M433 393h50.500v33H433zM450 494h49.500v33H450zM484 410h16M500 511h17M636 444h33M636 478h33M749 461h21M804 410v52" />
                    <path d="M500 410h119v34h17M517 511h17v-33h102M770 461h33" stroke="#f00" />
                    <path d="M709 438h-40v45h40" />
                  </g>
                  <g fill="none" stroke="#000" stroke-width="2">
                    <path d="M708 438c39 0 39 45 0 45" />
                    <circle cx="742.300" cy="460.700" r="5.200" stroke-width="1.700" />
                    <circle v-if="!c.on" cx="804" cy="393" r="16.300" fill="#fff" />
                  </g>
                  <g v-if="c.on" stroke="#0080ff" stroke-width="2">
                    <circle cx="804" cy="393" r="16.300" fill="#0080ff" />
                    <path d="M770 393h68.500M804 359v34M776.800 365.500l55.500 55.500M832.300 365.500L776.800 421" />
                  </g>
                  <g class="lbl">
                    <text x="467" y="381.200">{{ c.a }}</text><text x="483.500" y="482.500">{{ c.b }}</text>
                    <text x="466.700" y="452.700">Key = Space</text><text x="483.700" y="554.200">Key = Space</text>
                    <text x="703" y="426.200">{{ c.u }}</text><text x="703.300" y="508.800">NAND2</text>
                    <text x="804.300" y="347.800">{{ c.x }}</text><text x="878" y="416.800">2.5 V</text>
                    <text class="num" x="456" y="417.300">{{ c.va }}</text><text class="num" x="473" y="518.300">{{ c.vb }}</text>
                  </g>
                </g>
              </g>
            </svg>
            <div class="vs"><i /></div>
            <div class="hs"><i /></div>
          </div>
        </div>
        <div class="tabs">
          <div v-for="t in tabs" :key="t.n" class="tab" :class="{ act: t.n === 5 }" :style="{ width: t.w + 'px' }">
            <svg width="20" height="20" v-html="icons.doc" /><Tx :t="t.t" :w="t.tw" :s="15" c="#111" />
          </div>
          <div class="rest"><span class="casc"><svg width="16" height="15" fill="none" stroke="#000080" stroke-width="1.500"><path d="M2 2h8v5H2zM12 1v4h2" /><path d="M6 6h8v7H6zM6 8h8" fill="#fff" /></svg></span></div>
        </div>
      </section>

      <aside class="right">
        <div class="inst">
          <span v-for="(s, k) in instruments" :key="k" class="ic"><svg class="dis" width="20" height="20" v-html="s" /></span>
          <hr>
          <span class="ic2"><svg class="dis" width="20" height="20"><path d="M2 2h17v17H2z" fill="#a0a0a0" /><path d="M2 1h17M2 19h17" stroke="#a0a0a0" stroke-width="2" stroke-dasharray="2 1" /></svg><svg class="dis" width="4" height="6"><path d="M0 0l4 3-4 3z" fill="#999" /></svg></span>
          <hr>
          <span class="ic2"><svg class="dis" width="20" height="20" fill="none" stroke="#a0a0a0" stroke-width="1.500"><path d="M1 8l5 4 3 5M6 12l6-7 4-2M9 16l6-8M4 6l6 8 5-4M12 3l5 7" /></svg><svg class="dis" width="4" height="6"><path d="M0 0l4 3-4 3z" fill="#999" /></svg></span>
          <hr>
          <span class="ic3"><svg class="dis" width="20" height="20" fill="none" stroke="#a0a0a0" stroke-width="1.500"><circle cx="6" cy="14" r="4" stroke-width="3" /><path d="M6 11v6M3 14h6" stroke-width="1" /><path d="M9 11l3-7 3-3M11 14h8M14 4l5 1" /></svg></span>
        </div>
      </aside>
    </main>

    <div class="status">
      <div class="s0">-</div>
      <div class="s1"><Tx t="Design5: Simulating..." :w="140" :s="14.500" /></div>
      <div class="s2"><Tx t="Tran: 3.869 s" :w="80" :s="14.500" /></div>
      <div class="s3"><i v-for="n in 7" :key="n" :class="{ lit: n < 3 || n > 5 }" /></div>
    </div>

    <footer class="task">
      <svg class="wx" width="32" height="30"><defs><linearGradient id="sun" x1="0" y1="0" x2="1" y2="1"><stop offset="0" stop-color="#f6b93a" /><stop offset="1" stop-color="#ef7a12" /></linearGradient></defs><circle cx="16" cy="15" r="13" fill="url(#sun)" /><path d="M4 11a4 4 0 010-8 5 5 0 019-1 4 4 0 014 5q0 4-4 4z" fill="#c3d6f4" /><path d="M17 27a4 4 0 010-7 5 5 0 019-2 4 4 0 014 5q0 4-4 4z" fill="#b4cbf2" /></svg>
      <div class="wt"><Tx t="34°C" :w="31" :s="14" c="#fff" /><Tx t="Partly sunny" :w="81" :s="14" c="#c8bfbf" /></div>
      <svg class="start" width="30" height="30"><defs><linearGradient id="wn" x1="0" y1="0" x2="1" y2="1"><stop offset="0" stop-color="#7fe0ff" /><stop offset="1" stop-color="#0a8df0" /></linearGradient></defs><path d="M0 1q0-1 1-1h13v14H0zM15.500 0H29q1 0 1 1v13H15.500zM0 15.500h14V30H1q-1 0-1-1zM15.500 15.500H30V29q0 1-1 1H15.500z" fill="url(#wn)" /></svg>
      <div class="search"><svg width="18" height="18"><circle cx="10.500" cy="7" r="6" fill="none" stroke="#fff" stroke-width="1.600" /><path d="M6 11.500L1 17" stroke="#fff" stroke-width="1.800" /></svg><Tx t="Search" :w="45" :s="14" c="#fff" /></div>
      <div class="apps">
        <span v-for="a in apps" :key="a.k" class="app-i" :class="a.k"><svg width="30" height="30" overflow="visible" v-html="a.s" /></span>
      </div>
      <div class="tray">
        <svg width="30" height="24" fill="none" stroke="#fff" stroke-width="1.500"><path d="M8 16l7-8 7 8" /></svg>
        <svg width="30" height="24"><path d="M9 18a4 4 0 010-8 6 6 0 0111-1 5 5 0 011 9z" fill="#e8e8e8" /><path d="M9 18a4 4 0 011-8l11 8z" fill="#bbb" /></svg>
        <svg width="30" height="24" fill="none" stroke="#fff" stroke-width="1.500"><path d="M6 10c1-8 14-9 17-2M23 2v6h-6M6 16c1 4 4 6 7 6M6 22v-6h6" /><circle cx="20" cy="17" r="5" fill="#ff9500" stroke="none" /></svg>
        <svg width="30" height="24"><path d="M12 2l4 3-4 3-4-3zM20 2l4 3-4 3-4-3zM20 9l4 3-4 3-4-3z" fill="#fff" /><circle cx="11" cy="15.500" r="6" fill="#d8001c" /><text x="11" y="19.500" font-size="10" fill="#fff" text-anchor="middle" font-family="Open Sans" font-weight="700">7</text></svg>
      </div>
      <div class="lang"><Tx t="ENG" :w="29" :s="14" c="#fff" /><Tx t="IN" :w="14" :s="14" c="#fff" /></div>
      <div class="net">
        <svg width="30" height="24" fill="none" stroke="#fff" stroke-width="1.600"><path d="M5.500 9.500c5-6 14-6 19 0M8.500 13c3.500-4 9.500-4 13 0M11.500 16.500c2-2.300 5-2.300 7 0" /><circle cx="15" cy="19" r="1" fill="#fff" /></svg>
        <svg width="30" height="24" fill="none" stroke="#fff" stroke-width="1.500"><path d="M6 9.500h3l4-4v13l-4-4H6zM16 9c1.500 2 1.500 4 0 6M19 7c2.500 3 2.500 7 0 10" /><path d="M21.500 5c3 4 3 10 0 14" stroke="#777" /></svg>
        <svg width="30" height="24"><rect x="6.800" y="6" width="15" height="12" rx="2.500" fill="none" stroke="#fff" stroke-width="1.600" /><rect x="9" y="8" width="8" height="8" fill="#fff" /><path d="M24 10v4" stroke="#fff" stroke-width="2" /></svg>
      </div>
      <div class="clock"><Tx t="19:58" :w="35" :s="14" c="#fff" /><Tx t="28-03-2023" :w="78" :s="14" c="#fff" /></div>
      <div class="badge">4</div>
    </footer>
  </div>
</template>

<style>
body { margin: 0; overflow: hidden; }
</style>

<style scoped>
* { box-sizing: border-box; }
.app { width: 1920px; height: 1080px; display: flex; flex-direction: column; background: #f0f0f0; font-family: 'Open Sans', 'Noto Sans', sans-serif; overflow: hidden; }
svg { display: block; flex: none; }
.title { height: 30px; background: #fff; border-bottom: 1px solid #a0a0a0; display: flex; align-items: center; padding: 0 0 1px 3px; flex: none; }
.logo { margin-right: 6px; }
.sys { margin: 0 26px 0 auto; }
.menu { height: 31px; border-top: 1px solid #fff; border-bottom: 1px solid #a0a0a0; border-right: 1px solid #a0a0a0; display: flex; align-items: center; padding: 0 0 2px 4px; flex: none; }
.mdi { margin-left: auto; display: flex; gap: 1px; padding-right: 2px; padding-top: 6px; }
.btn { width: 20px; height: 20px; border: 1px solid #fff; border-right: 2px solid #777; border-bottom: 2px solid #777; background: #f0f0f0; }
.bars { height: 64px; flex: none; }
.row { height: 32px; display: flex; }
.tb { display: flex; align-items: center; height: 32px; border-bottom: 1px solid #a0a0a0; border-right: 1px solid #a0a0a0; border-top: 1px solid #fff; border-left: 1px solid #fff; flex: none; }
.t0 { width: 346px; padding-left: 10px; }
.t1 { width: 706px; padding-left: 10px; }
.tz { margin-left: 304px; width: 154px; padding-left: 9px; border-left-color: #e0e0e0; }
.th { margin-left: 47px; width: 70px; padding-left: 10px; }
.t4 { width: 590px; padding-left: 10px; }
.sim { width: 268px; padding-left: 10px; }
.t5 { width: 238px; padding-left: 10px; }
.r2 .tb { border-bottom: 0; padding-bottom: 2px; }
.cell { height: 28px; display: flex; align-items: center; justify-content: center; flex: none; }
.sep::after { content: ''; width: 2px; height: 26px; background: #a0a0a0; border-right: 1px solid #fff; }
.pressed { height: 26px; border: 1px solid #a0a0a0; border-right-color: #fff; border-bottom-color: #fff; background: #f8f8f8; }
.dis { filter: drop-shadow(1px 1px 0 #fff); }
.combo { width: 185px; height: 26px; border: 1px solid #d4d4d4; background: #fff; display: flex; align-items: center; justify-content: space-between; padding: 0 3px 0 4px; }
.playbox { width: 27px; height: 26px; border: 1px solid #a0a0a0; border-right-color: #fff; border-bottom-color: #fff; background: #f8f8f8; display: flex; align-items: center; justify-content: center; padding-left: 4px; }
.pause { margin-left: 10px; }
.stop { margin-left: 17px; }
.wrench { margin: 0 3px 4px 10px; }
.sim > svg:last-child { margin-bottom: 4px; }
.main { height: 873px; display: flex; flex: none; }
.left { width: 198px; height: 872px; border-top: 1px solid #a0a0a0; border-right: 1px solid #696969; border-bottom: 1px solid #a0a0a0; box-shadow: inset -3px 0 0 #f0f0f0, inset -4px 0 0 #fff; flex: none; }
.lhead { display: flex; padding: 3px 0 0 3px; height: 31px; }
.ltitle { width: 147px; height: 25px; background: linear-gradient(90deg, #bccbdc, #d8e5f2); padding: 1px 0 0 3px; margin-right: 4px; }
.sbtn { width: 16px; height: 16px; margin: 4px 2px 0 0; border: 1px solid #fff; border-right-color: #696969; border-bottom-color: #696969; }
.lbody { width: 183px; height: 812px; margin-left: 4px; border: 1px solid #fff; border-right: 2px solid #808080; border-bottom: 2px solid #808080; }
.ltools { height: 30px; display: flex; gap: 10px; align-items: center; padding: 1px 0 0 5px; }
.tree { width: 179px; height: 779px; border: 1px solid #828790; background: #fff; padding-top: 2px; }
.trow { height: 22px; display: flex; align-items: center; }
.exp { margin-left: 4px; overflow: visible; }
.dl { stroke: #808080; stroke-dasharray: 1 1; fill: none; }
.nic { margin-left: -5px; }
.nlab { margin-left: 5px; }
.kid { padding-left: 36px; }
.elbow { overflow: visible; margin-right: -1px; }
.lab { height: 22px; margin-left: 2px; padding: 1px 2px 0 3px; }
.sel { background: #f0f0f0; }
.ltabs { display: flex; padding-left: 5px; height: 26px; }
.lt { display: flex; align-items: center; flex: none; }
.on { width: 67px; height: 23px; border-bottom: 1px solid #696969; border-left: 1px solid #fff; padding: 4px 0 0 5px; }
.vis { width: 56px; height: 22px; border: 1px solid #696969; border-bottom-width: 2px; border-right-width: 2px; border-radius: 0 0 2px 2px; padding-left: 4px; }
.pr { width: 19px; height: 22px; border: 1px solid #696969; border-width: 1px 0 2px 1px; padding-left: 6px; margin-left: 1px; }
.ab { width: 19px; height: 19px; margin-top: 4px; border: 1px solid #a0a0a0; display: flex; align-items: center; justify-content: center; flex: none; }
.center { width: 1690px; flex: none; }
.frame { height: 845px; border-top: 2px solid #696969; border-right: 1px solid #696969; border-bottom: 1px solid #696969; padding: 2px 3px 6px 4px; box-shadow: inset 2px 0 0 #fff; }
.inner { width: 1682px; height: 834px; border: 2px solid #696969; border-top-color: #808080; border-right-color: #e3e3e3; border-bottom: 1px solid #e3e3e3; box-shadow: 1px 1px 0 #fff; display: grid; grid-template-columns: 1658px 1fr; grid-template-rows: 811px 1fr; }
.canvas { background: #fff; overflow: hidden; }
.lbl { font: bold 23px 'Liberation Sans', Arial, sans-serif; letter-spacing: 1.1px; text-anchor: middle; }
.num { font-weight: 400; font-size: 21px; letter-spacing: 0; }
.vs { display: flex; padding: 170px 0 0 7px; }
.vs i { width: 6px; height: 460px; background: #858585; }
.hs { grid-column: 1 / 3; padding: 7px 0 0 73px; }
.hs i { display: block; width: 1486px; height: 6px; background: #858585; }
.tabs { display: flex; height: 28px; padding-left: 3px; }
.tab { height: 24px; border: 1px solid #333; border-top: 0; border-left-color: #fff; border-bottom-width: 2px; border-radius: 0 0 3px 3px; display: flex; align-items: center; gap: 4px; padding: 3px 0 0 3px; flex: none; }
.act { height: 27px; margin-top: -1px; background: #f0f0f0; padding-top: 4px; border-right-width: 2px; }
.rest { flex: 1; display: flex; justify-content: flex-end; padding: 6px 2px 0 0; }
.casc { width: 18px; height: 17px; border: 1px solid #fff; border-right-color: #696969; border-bottom-color: #696969; }
.right { width: 32px; height: 872px; border-top: 1px solid #a0a0a0; border-bottom: 1px solid #a0a0a0; flex: none; }
.inst { height: 612px; border-top: 2px solid #fff; border-right: 1px solid #a0a0a0; border-bottom: 1px solid #a0a0a0; padding: 10px 0 0 1px; display: flex; flex-direction: column; }
.ic { height: 26px; padding: 3px 0 0 4px; flex: none; }
.inst hr { margin: 3px 2px 0 0; height: 2px; border: 0; border-top: 1px solid #a0a0a0; background: #fff; width: 28px; flex: none; }
.ic2 { height: 43px; padding: 8px 0 0 4px; display: flex; flex-direction: column; gap: 5px; }
.ic2 svg:last-child { margin-left: 8px; }
.ic3 { padding: 6px 0 0 4px; }
.status { height: 22px; border-top: 1px solid #d4d4d4; display: flex; flex: none; font-size: 14px; line-height: 22px; }
.s0 { width: 1489px; padding-left: 1342px; }
.s1 { width: 184px; border-left: 1px solid #d4d4d4; padding: 2px 0 0 5px; }
.s2 { width: 183px; border-left: 1px solid #d4d4d4; padding: 2px 0 0 3px; }
.s3 { border-left: 1px solid #d4d4d4; padding: 5px 0 0 3px; display: flex; gap: 1px; }
.s3 i { width: 7px; height: 13px; border: 1px solid #a0a0a0; border-right-color: #fff; border-bottom-color: #fff; background: #e6e6e6; }
.s3 .lit { background: #00f000; border-color: #5a8a5a #c8e8c8 #c8e8c8 #207020; }
.task { height: 60px; flex: none; display: flex; align-items: center; background: linear-gradient(90deg, #2b2129 0, #12262f 130px, #152a2c 160px, #272c19 215px, #371f15 320px, #371f15 480px, #2a211e 590px, #272926 720px, #272926 1400px, #2b2121 1480px, #351b18 1600px, #36201a 1750px, #2c2224 1860px, #292828 1920px); }
.wx { margin-left: 25px; overflow: visible; }
.wt { margin-left: 8px; width: 566px; padding-top: 1px; }
.start { width: 30px; }
.search { margin-left: 17px; width: 124px; height: 40px; border-radius: 20px; background: rgba(255, 255, 255, 0.07); border: 1px solid rgba(255, 255, 255, 0.05); display: flex; align-items: center; padding-left: 28px; gap: 6px; }
.apps { display: flex; margin-left: 5px; }
.app-i { width: 55px; height: 60px; display: flex; align-items: center; justify-content: center; position: relative; flex: none; }
.pp::after, .ms::after { content: ''; position: absolute; left: 24px; top: 50px; width: 8px; height: 4px; border-radius: 2px; background: #a0a0a0; }
.ms::after { left: 18px; width: 20px; background: #4cc2ff; }
.ms::before { content: ''; position: absolute; left: 3px; top: 5px; width: 50px; height: 50px; border-radius: 5px; background: rgba(255, 255, 255, 0.08); }
.ms svg { position: relative; left: 1px; }
.app-i.task { background: none; }
.tray { display: flex; margin-left: 203px; }
.lang { width: 29px; margin-left: 14px; display: flex; flex-direction: column; align-items: center; padding-top: 1px; }
.net { display: flex; margin-left: 17px; }
.clock { width: 92px; display: flex; flex-direction: column; align-items: flex-end; padding-top: 1px; }
.badge { margin-left: 9px; width: 20px; height: 20px; border-radius: 50%; background: #4cc2ff; color: #123; font-size: 14px; line-height: 20px; text-align: center; }
</style>
